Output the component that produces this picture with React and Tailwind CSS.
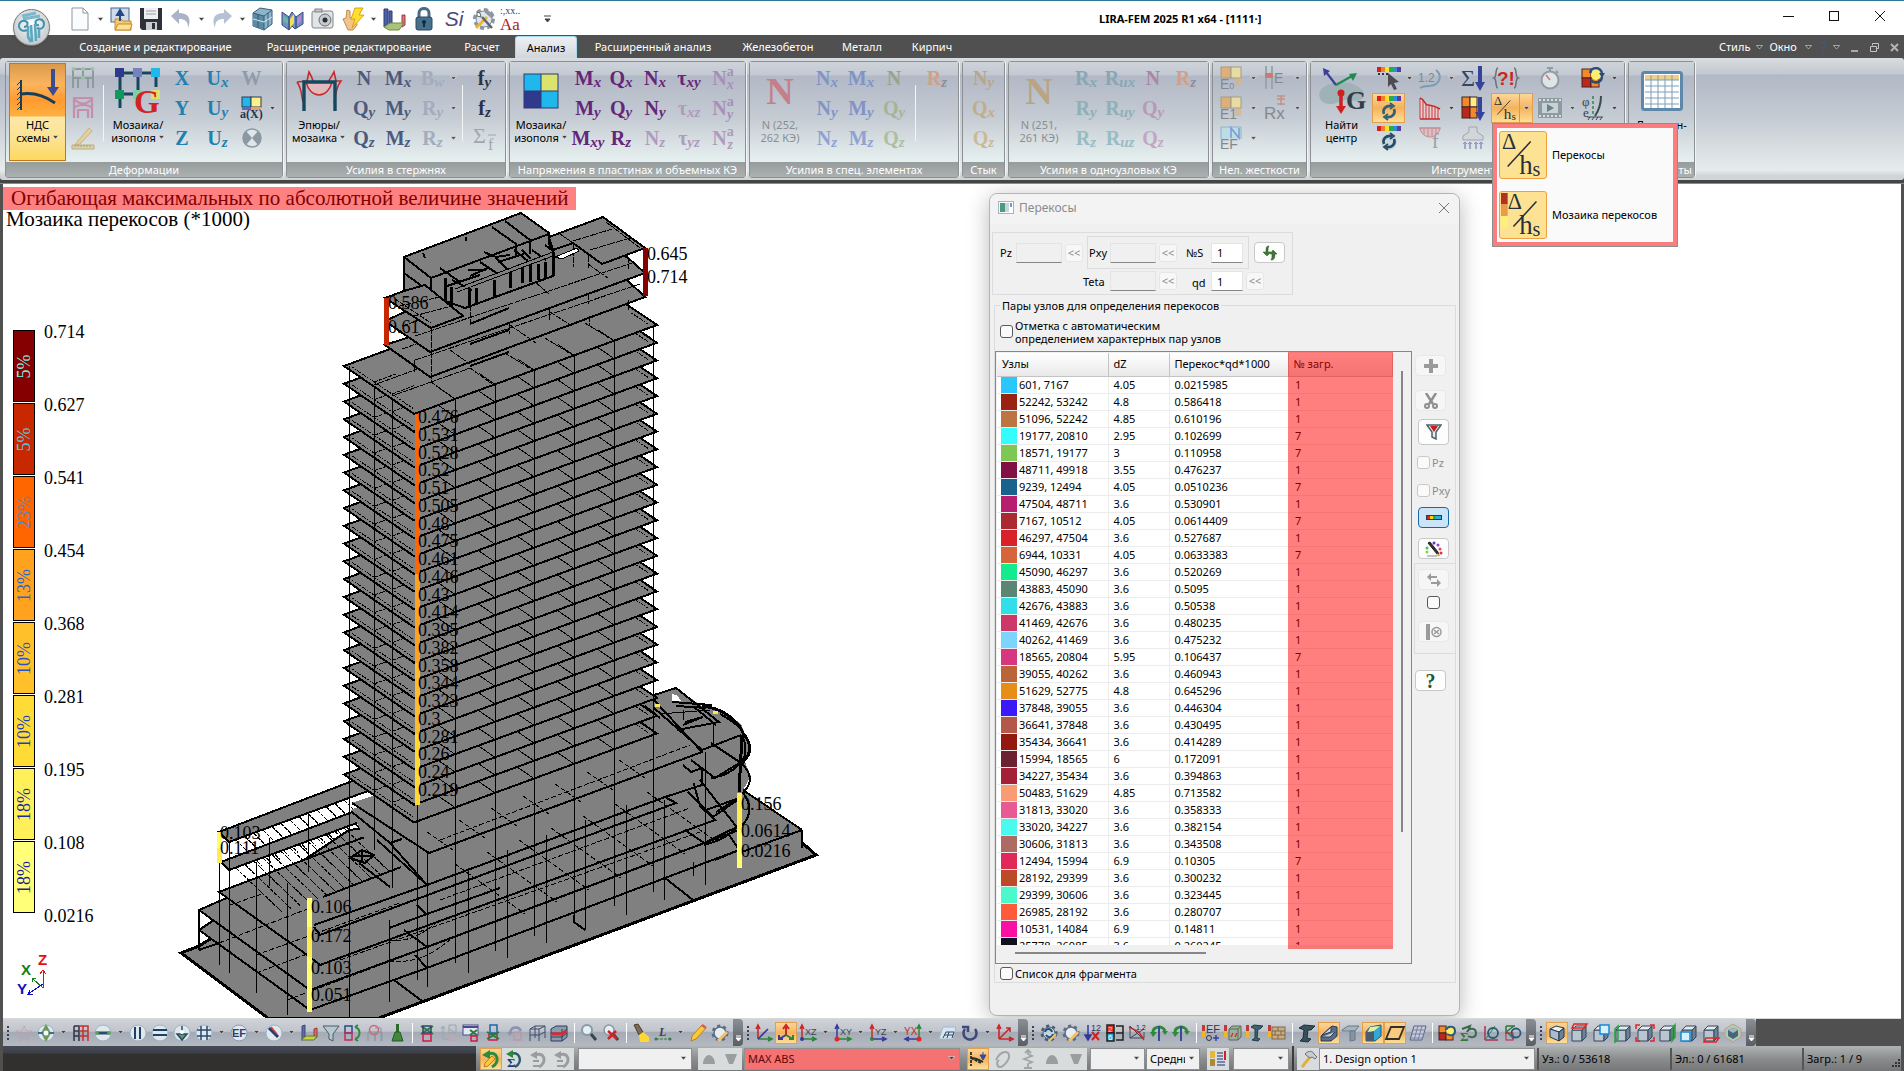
import React, { useState } from 'react';

// ---------- data ----------

const TABS = [
  { label: 'Создание и редактирование', cls: 'w-[187px]' },
  { label: 'Расширенное редактирование', cls: 'w-[200px]' },
  { label: 'Расчет', cls: 'w-[66px]' },
  { label: 'Анализ', cls: 'w-[62px]' },
  { label: 'Расширенный анализ', cls: 'w-[152px]' },
  { label: 'Железобетон', cls: 'w-[98px]' },
  { label: 'Металл', cls: 'w-[70px]' },
  { label: 'Кирпич', cls: 'w-[70px]' },
];

const ROWS = [
  ['#2bc6fb', '601, 7167', '4.05', '0.0215985', '1'],
  ['#9a2213', '52242, 53242', '4.8', '0.586418', '1'],
  ['#bd7443', '51096, 52242', '4.85', '0.610196', '1'],
  ['#35fdff', '19177, 20810', '2.95', '0.102699', '7'],
  ['#7dc855', '18571, 19177', '3', '0.110958', '7'],
  ['#821045', '48711, 49918', '3.55', '0.476237', '1'],
  ['#19628c', '9239, 12494', '4.05', '0.0510236', '7'],
  ['#b71e6f', '47504, 48711', '3.6', '0.530901', '1'],
  ['#ab2a31', '7167, 10512', '4.05', '0.0614409', '7'],
  ['#d9212a', '46297, 47504', '3.6', '0.527687', '1'],
  ['#d8653a', '6944, 10331', '4.05', '0.0633383', '7'],
  ['#12ec8c', '45090, 46297', '3.6', '0.520269', '1'],
  ['#5c8674', '43883, 45090', '3.6', '0.5095', '1'],
  ['#32dfe8', '42676, 43883', '3.6', '0.50538', '1'],
  ['#cd3868', '41469, 42676', '3.6', '0.480235', '1'],
  ['#7bd5ff', '40262, 41469', '3.6', '0.475232', '1'],
  ['#d7377f', '18565, 20804', '5.95', '0.106437', '7'],
  ['#bb6438', '39055, 40262', '3.6', '0.460943', '1'],
  ['#e68e18', '51629, 52775', '4.8', '0.645296', '1'],
  ['#3a19fb', '37848, 39055', '3.6', '0.446304', '1'],
  ['#b4594a', '36641, 37848', '3.6', '0.430495', '1'],
  ['#921810', '35434, 36641', '3.6', '0.414289', '1'],
  ['#6b2131', '15994, 18565', '6', '0.172091', '1'],
  ['#a42037', '34227, 35434', '3.6', '0.394863', '1'],
  ['#f99c73', '50483, 51629', '4.85', '0.713582', '1'],
  ['#e85a93', '31813, 33020', '3.6', '0.358333', '1'],
  ['#4afaef', '33020, 34227', '3.6', '0.382154', '1'],
  ['#ae6b63', '30606, 31813', '3.6', '0.343508', '1'],
  ['#e02859', '12494, 15994', '6.9', '0.10305', '7'],
  ['#bc4a29', '28192, 29399', '3.6', '0.300232', '1'],
  ['#4cf9ca', '29399, 30606', '3.6', '0.323445', '1'],
  ['#ff5a39', '26985, 28192', '3.6', '0.280707', '1'],
  ['#fb10a4', '10531, 14084', '6.9', '0.14811', '1'],
  ['#0e101c', '25778, 26985', '3.6', '0.260245', '1'],
];

const LEGEND = [
  ['#850000', '5%', '0.714', '#7ff0e0'],
  ['#c82800', '5%', '0.627', '#50c8e0'],
  ['#ff6600', '23%', '0.541', '#4a8ad0'],
  ['#ffa21e', '13%', '0.454', '#2c64c8'],
  ['#ffc02a', '10%', '0.368', '#2850c8'],
  ['#ffdc35', '10%', '0.281', '#2040b8'],
  ['#fff05a', '18%', '0.195', '#1c2ca0'],
  ['#ffff78', '18%', '0.108', '#1c2090'],
];

const TOWER_LABELS = [
  '0.476', '0.531', '0.528', '0.52', '0.51', '0.505', '0.48', '0.475', '0.461', '0.446', '0.43',
  '0.414', '0.395', '0.382', '0.358', '0.344', '0.323', '0.3', '0.281', '0.26', '0.24', '0.219',
];

// ---------- small helpers ----------

const Arrow = ({ light, className = '' }) => (
  <svg width="7" height="5" viewBox="0 0 7 5" className={`shrink-0 ${className}`}>
    <path d="M0.5 0.5h6L3.5 4z" fill={light ? '#555' : '#444'} stroke="#fff" strokeWidth="0.5" />
  </svg>
);

const Svg = ({ w = 24, h = w, vb = `0 0 ${w} ${h}`, children }) => (
  <svg width={w} height={h} viewBox={vb} className="block shrink-0 overflow-visible">{children}</svg>
);

// Letter with an index, as on the ribbon buttons
const Sym = ({ b, s, p, color = 'text-[#4b5a7c]', sc = '' }) => (
  <button className={`relative flex h-[30px] items-center justify-center font-serif-x text-[20px] leading-[22px] font-bold ${color}`}>
    <span>{b}</span>
    {p ? (
      <span className="flex flex-col text-[14px] leading-[13px]">
        <span>{p}</span>
        <span className="italic">{s}</span>
      </span>
    ) : (
      s && <span className={`-mb-2 text-[15px] leading-[16px] italic ${sc}`}>{s}</span>
    )}
  </button>
);

const Col = ({ w, children }) => (
  <div className={`flex shrink-0 flex-col items-center ${w}`}>{children}</div>
);

const Cell = ({ children, className = '' }) => (
  <div className={`flex h-[30px] items-center justify-center ${className}`}>{children}</div>
);

const Sep = ({ w }) => (
  <div className={`flex shrink-0 justify-center pt-[22px] ${w}`}>
    <div className="h-[56px] w-px bg-[#f4f6f6]" />
  </div>
);

const Panel = ({ w, label, children }) => (
  <section className={`flex h-[117px] shrink-0 flex-col rounded-[3px] border border-[#8d9092] shadow-[1px_0_0_#f4f4f4] ${w}`}>
    <div className="flex h-[100px] bg-[linear-gradient(#ced3da_0px,#c3c9d2_13px,#b2b9c6_14px,#c4cbd3_55px,#e6efef_98px)] pt-px">{children}</div>
    <div className="flex h-[15px] items-center justify-center bg-[linear-gradient(#969b9c,#abb0b1)] text-[11px] leading-[14px] whitespace-nowrap text-white">{label}</div>
  </section>
);

const BigButton = ({ w, icon, lines, arrow, dim }) => (
  <button className={`flex shrink-0 flex-col items-center text-[11px] leading-[13px] ${w} ${dim ? 'text-[#8a8d90]' : 'text-black'}`}>
    <span className="flex h-[55px] items-center justify-center">{icon}</span>
    <span>{lines[0]}</span>
    <span className="flex items-center gap-[2px] whitespace-nowrap">{lines[1]}{arrow && <Arrow />}</span>
  </button>
);

// ---------- ribbon icons ----------

const Mosaic = ({ s = 36 }) => (
  <Svg w={s} h={s} vb="0 0 36 36">
    <rect x="0.5" y="0.5" width="35" height="35" fill="#2d3a72" />
    <rect x="1.5" y="1.5" width="16" height="16" fill="#20b8ec" />
    <rect x="18.5" y="1.5" width="16" height="16" fill="#dbe36c" />
    <rect x="1.5" y="18.5" width="16" height="16" fill="#303a8c" />
    <rect x="18.5" y="18.5" width="16" height="16" fill="#20b8ec" />
  </Svg>
);

const BeamIcon = () => (
  <Svg w={42} h={46}>
    <path d="M4 12v30" stroke="#173f58" strokeWidth="2" />
    <path d="M0 17l4-4M0 22l4-4M0 27l4-4M0 32l4-4M0 37l4-4M0 42l4-4" stroke="#173f58" />
    <path d="M4 26c14-2 24 2 34 9" fill="none" stroke="#173f58" strokeWidth="3" />
    <path d="M36 1v20" stroke="#3c4c92" strokeWidth="4" />
    <path d="M30 19h12l-6 9z" fill="#3c4c92" />
  </Svg>
);

const MosaicG = () => (
  <Svg w={46} h={46}>
    <path d="M5 5h36M5 26h18M5 5v35M23 5v20M41 5v14" stroke="#17465f" strokeWidth="3" fill="none" />
    <rect width="9" height="9" fill="#303a8c" /><rect x="18" width="9" height="9" fill="#7482be" /><rect x="36" width="9" height="9" fill="#20b8ec" />
    <rect y="22" width="9" height="9" fill="#14965f" /><rect x="18" y="22" width="9" height="9" fill="#7fd0a8" /><rect x="36" y="22" width="9" height="9" fill="#dbe36c" />
    <text x="19" y="45" fontSize="33" fontWeight="bold" fill="#d22222" fontFamily="Liberation Serif">G</text>
  </Svg>
);

const DiagramIcon = () => (
  <Svg w={46} h={40}>
    <path d="M1 11l10-1 2-9c6 10 3 12 11 20C32 13 34 8 38 1l2 9h5c-6 8-5 14-7 22M1 11c5 7 4 12 6 20" fill="none" stroke="#c82a2a" strokeWidth="1.6" />
    <path d="M10 11c2 8 7 13 13 13s11-5 13-13z" fill="#e2b9bd" stroke="#c82a2a" strokeWidth="1.4" />
    <path d="M8 40V11h31v29" fill="none" stroke="#17465f" strokeWidth="3.4" />
  </Svg>
);

const BigN = ({ color }) => (
  <span className={`font-serif-x text-[38px] leading-[40px] font-bold ${color}`}>N</span>
);

const FrameIcon = ({ kind }) => (
  <Svg w={24}>
    {kind === 'frame' && <path d="M2 22V3h20v19M2 12h20M12 3v9M7 12v10M17 12v10" fill="none" stroke="#8d9a9e" strokeWidth="2" />}
    {kind === 'frame' && <g fill="#9cc3a8"><circle cx="2.500" cy="3" r="2" /><circle cx="12" cy="3" r="2" /><circle cx="21.500" cy="3" r="2" /><circle cx="12" cy="12" r="2" /></g>}
    {kind === 'pink' && <path d="M3 22V2h18v20M3 12c4-4 14-4 18 0M3 3c6 6 12 6 18 0M7 22v-8h10v8" fill="none" stroke="#c48fae" strokeWidth="2.200" />}
    {kind === 'ruler' && <g><path d="M6 16L18 2l3 3L9 18l-5 1z" fill="#e4cf9e" stroke="#c9b27e" /><path d="M1 19h22v4H1z" fill="#dcd2a4" stroke="#b9ad84" /><path d="M4 19v2M7 19v2M10 19v2M13 19v2M16 19v2M19 19v2" stroke="#a79b74" /></g>}
  </Svg>
);

const AxIcon = () => (
  <Svg w={24}>
    <rect x="2" y="1" width="9" height="10" fill="#20b8ec" stroke="#2d3a52" /><rect x="11" y="1" width="10" height="10" fill="#fcf18a" stroke="#2d3a52" />
    <rect x="2" y="11" width="9" height="3" fill="#6a67ae" /><rect x="11" y="11" width="10" height="3" fill="#e8a070" />
    <text x="0" y="22" fontSize="12" fontWeight="bold" fill="#23324f" fontFamily="Liberation Serif">a(X)</text>
  </Svg>
);

const CircleX = () => (
  <Svg w={20}>
    <circle cx="10" cy="10" r="9" fill="#8b99a5" />
    <path d="M10 10L4 3a9 9 0 0 1 12 0zM10 10l-6 7a9 9 0 0 0 12 0z" fill="#dfe5e8" />
    <circle cx="10" cy="10" r="9" fill="none" stroke="#8b99a5" strokeWidth="1.500" />
  </Svg>
);

const SumF = () => (
  <Svg w={24} h={26} vb="0 0 24 26">
    <text x="0" y="18" fontSize="22" fill="#9fa6b0" fontFamily="Liberation Serif">Σ</text>
    <text x="15" y="25" fontSize="16" fill="#9fa6b0" fontFamily="Liberation Serif">f</text>
    <path d="M15 10h8" stroke="#9fa6b0" />
  </Svg>
);

const StiffIcon = ({ t, sub, kind = 'box' }) => (
  <Svg w={24} h={26}>
    {kind === 'box' && <g><rect x="2" y="2" width="10" height="11" fill="#ddb078" stroke="#a39a8a" /><rect x="12" y="2" width="10" height="11" fill="#e6dca4" stroke="#a39a8a" /><path d="M16 13h6v8h-6" fill="#ddb078" opacity=".6" /></g>}
    {kind === 'bar' && <g><path d="M3 1v23M9 1v23" stroke="#9aa6ae" strokeWidth="2" /><rect x="2" y="8" width="8" height="5" fill="#c67c74" /></g>}
    {kind === 'ef' && <g><path d="M2 14V2h20v12" fill="#bcdce8" stroke="#8bb5c4" /><path d="M12 13V3l8 10V3" stroke="#7b9bd0" fill="none" strokeWidth="1.500" /></g>}
    {kind === 'rx' && <path d="M14 1h8M14 9h8M18 1v9M14 4h8" stroke="#c39187" strokeWidth="1.500" />}
    <text x={kind === 'bar' ? 11 : 1} y={kind === 'bar' ? 18 : 24} fontSize={kind === 'rx' ? 17 : 14} fill="#84888e" fontFamily="Liberation Sans">{t}<tspan fontSize="9">{sub}</tspan></text>
  </Svg>
);

const CenterIcon = () => (
  <Svg w={48} h={46}>
    <path d="M2 30c-4-10 10-16 22-16s24 8 22 14-10 5-16 4-10 4-16 4-10-1-12-6z" fill="#9fb2b6" />
    <path d="M18 17L8 4" stroke="#3b3f9a" strokeWidth="2.200" /><path d="M5 0l7 3-6 5z" fill="#3b3f9a" />
    <path d="M18 17l16-9" stroke="#1f8a4e" strokeWidth="2.200" /><path d="M39 5l-8 1 4 7z" fill="#1f8a4e" />
    <path d="M23 25v14" stroke="#cf2020" strokeWidth="3.500" /><circle cx="23" cy="25" r="3.500" fill="#cf2020" /><path d="M18 38h10l-5 8z" fill="#cf2020" />
    <text x="28" y="41" fontSize="26" fontWeight="bold" fill="#333d48" fontFamily="Liberation Serif">G</text>
  </Svg>
);

const ScaleBar = ({ y = 0 }) => (
  <g>
    {['#d81e1e', '#f08020', '#f6e22a', '#2da84a', '#2a8fd8', '#5a3a9c'].map((c, i) => (
      <rect key={c} x={i * 4} y={y} width="4" height="5" fill={c} />
    ))}
  </g>
);

const Rotor = ({ dark }) => (
  <g fill="none" stroke={dark ? '#274a63' : '#2f5f7a'} strokeWidth="2.600">
    <path d="M7 19c-2-5 2-9 8-8" /><path d="M17 14c2 5-2 9-8 8" />
    <path d="M13 8l4 3-4 3M11 19l-4 3 4 3" strokeWidth="1.800" />
  </g>
);

const ToolIcon = ({ k }) => (
  <Svg w={24} h={26}>
    {k === 'pick' && <g><ScaleBar y={2} /><path d="M1 9h2M5 9h2M9 9h2" stroke="#333" strokeWidth="2" /><path d="M11 8l11 9-5 1 3 6-3 1-3-6-3 3z" fill="#4e4a52" /></g>}
    {k === 'rot' && <g><ScaleBar y={1} /><Rotor /></g>}
    {k === 'rot2' && <g><ScaleBar y={1} /><circle cx="12" cy="17" r="8" fill="#c9d6df" /><Rotor dark /></g>}
    {k === 'num' && <g><text x="0" y="17" fontSize="12" fill="#7b8894" fontFamily="Liberation Sans">1.2</text><path d="M18 5c5 4 5 10 0 14s-10 0-16 4" fill="none" stroke="#7b9cb4" strokeWidth="2" /></g>}
    {k === 'graph' && <g><path d="M2 3c6 2 3 6 8 7s5 0 12 4v10H2z" fill="#e9ccd0" /><path d="M2 24V3M5 24V5M8 24V9M11 24V11M14 24V11M17 24V12M20 24V13" stroke="#c43a3a" /><path d="M2 3c6 2 3 6 8 7s5 0 12 4M2 24h20" fill="none" stroke="#c42a2a" strokeWidth="1.600" /></g>}
    {k === 'f' && <g><path d="M2 3c2 12 18 12 20 0z" fill="#e0bfc4" stroke="#c08c92" /><path d="M1 3h22M6 4v5M10 4v7M14 4v7M18 4v5" stroke="#c08c92" /><text x="14" y="23" fontSize="20" fill="#9a9ea2" fontFamily="Liberation Serif">f</text></g>}
    {k === 'sum' && <g><text x="0" y="21" fontSize="24" fill="#33456b" fontFamily="Liberation Serif">Σ</text><path d="M19 1v17" stroke="#35449a" strokeWidth="4" /><path d="M14 17h10l-5 9z" fill="#35449a" /></g>}
    {k === 'mos' && <g><rect x="1" y="2" width="8" height="10" fill="#f08a2a" stroke="#4a2020" /><rect x="9" y="2" width="7" height="10" fill="#fcef8a" stroke="#4a2020" /><rect x="1" y="12" width="8" height="11" fill="#b8281e" stroke="#4a2020" /><rect x="9" y="12" width="7" height="11" fill="#f08a2a" stroke="#4a2020" /><path d="M19 2v17" stroke="#35449a" strokeWidth="4" /><path d="M14 17h10l-5 9z" fill="#35449a" /></g>}
    {k === 'soil' && <g><path d="M8 2h8v5l6 4v4H2v-4l6-4z" fill="#d2d6da" stroke="#9ea6ae" /><path d="M4 24v-6M9 24v-6M15 24v-6M20 24v-6" stroke="#8b93bc" strokeWidth="1.500" /><path d="M2 19l2-2 2 2M7 19l2-2 2 2M13 19l2-2 2 2M18 19l2-2 2 2" stroke="#8b93bc" fill="none" /></g>}
    {k === 'q' && <g><text x="3" y="20" fontSize="19" fontWeight="bold" fill="#cc2424" fontFamily="Liberation Sans">?!</text><path d="M4 3c-3 0-1 9-4 10 3 1 1 10 4 10M20 3c3 0 1 9 4 10-3 1-1 10-4 10" fill="none" stroke="#6b7078" strokeWidth="1.500" /></g>}
    {k === 'watch' && <g><circle cx="12" cy="15" r="8.500" fill="#dfe4e6" stroke="#909ca2" strokeWidth="2" /><path d="M9 3h6M12 3v4M18 6l2 2" stroke="#909ca2" strokeWidth="2" /><path d="M12 15L8 10" stroke="#c47a7a" strokeWidth="1.500" /></g>}
    {k === 'film' && <g><rect x="0" y="3" width="24" height="20" fill="#8e9aa0" /><path d="M1 5h22M1 21h22" stroke="#d9e0e2" strokeWidth="2" strokeDasharray="2 2" /><rect x="4" y="8" width="16" height="10" fill="#c6d2d6" /><path d="M9 9l7 4-7 4z" fill="#6f7f88" /></g>}
    {k === 'swap' && <g><rect x="1" y="4" width="9" height="9" fill="#f08a2a" stroke="#4a2020" /><rect x="1" y="13" width="9" height="9" fill="#b8281e" stroke="#4a2020" /><rect x="10" y="13" width="8" height="9" fill="#f08a2a" stroke="#4a2020" /><circle cx="15" cy="10" r="5" fill="#fcef6a" /><path d="M9 8c1-6 10-7 12 0M21 12c-1 6-8 7-11 3" fill="none" stroke="#274a78" strokeWidth="2.400" /><path d="M18 8h6l-3 5z" fill="#274a78" /></g>}
    {k === 'phi' && <g><text x="1" y="11" fontSize="13" fill="#3a4248" fontFamily="Liberation Serif">φ</text><text x="2" y="22" fontSize="13" fill="#3a4248" fontFamily="Liberation Serif">e</text><path d="M12 1v20" stroke="#2d8a4a" strokeDasharray="3 2" strokeWidth="1.500" /><path d="M20 1c0 8-2 14-6 20" stroke="#3c4a52" strokeWidth="2" fill="none" /><path d="M6 22h16M7 25l2-3M11 25l2-3M15 25l2-3M19 25l2-3" stroke="#3c4a52" /></g>}
  </Svg>
);

const DeltaHs = ({ size = 26, mosaic }) => (
  <Svg w={size} h={size} vb="0 0 48 48">
    {mosaic && <g><rect x="1" y="1" width="7" height="12" fill="#b13222" /><rect x="1" y="13" width="7" height="12" fill="#ea9a48" /><rect x="1" y="25" width="7" height="12" fill="#fbf07a" /></g>}
    <g transform={mosaic ? 'translate(6 0)' : undefined} fill="#26303a" fontFamily="Liberation Serif">
      <text x="2" y="18" fontSize="23">Δ</text>
      <path d="M8 36L32 10" stroke="#26303a" strokeWidth="1.600" />
      <text x={mosaic ? 14 : 20} y="44" fontSize="28">h<tspan fontSize="21" dy="2">s</tspan></text>
    </g>
  </Svg>
);

const TableIcon = () => (
  <Svg w={42} h={40}>
    <rect x="1.500" y="1.500" width="39" height="37" rx="2" fill="#fdfdfd" stroke="#5d88ab" strokeWidth="3" />
    <rect x="4" y="4" width="34" height="5" fill="#eed08a" />
    <path d="M4 9h34M4 15h34M4 21h34M4 27h34M4 33h34M10 4v33M17 4v33M24 4v33M31 4v33" stroke="#7f9fba" />
  </Svg>
);

// ---------- quick access icons ----------

const QIcon = ({ k }) => (
  <Svg w={24}>
    {k === 'new' && <path d="M4 1h11l5 5v17H4zM15 1v5h5" fill="#fbfcfd" stroke="#8e979e" />}
    {k === 'open' && <g><rect x="2" y="1" width="18" height="14" fill="#cfdbea" stroke="#47648e" /><path d="M6 23V12h6l2 2h8v9z" fill="#f7c765" stroke="#c58c2a" /><path d="M9 17h14l-2 6H6z" fill="#fbe09a" stroke="#c58c2a" /><path d="M11 14V6M8 8l3-5 3 5z" stroke="#244a86" strokeWidth="2" fill="#244a86" /></g>}
    {k === 'save' && <g><path d="M1 1h22v22H3l-2-2z" fill="#2e3136" /><rect x="5" y="1" width="14" height="11" fill="#eef0f2" /><path d="M7 4h10M7 7h10" stroke="#9aa0a6" /><rect x="7" y="15" width="11" height="8" fill="#c9cdd2" /><rect x="13" y="16" width="3" height="6" fill="#2e3136" /></g>}
    {k === 'undo' && <path d="M2 9l8-7v4c9 0 13 5 9 15 0-7-3-9-9-9v5z" fill="#aab3c8" />}
    {k === 'redo' && <path d="M22 9l-8-7v4C5 6 1 11 5 21c0-7 3-9 9-9v5z" fill="#b4c2d4" />}
    {k === 'cube' && <g><path d="M2 6l7-5 12 2v14l-8 6-11-4z" fill="#8db4c8" stroke="#34617c" /><path d="M2 6v13l11 4V9z" fill="#5b8aa4" /><path d="M2 6l11 3 8-6M13 9v14M7 7v14M17 6v14" stroke="#34617c" fill="none" /><path d="M2 12l11 3 8-5" stroke="#d7e7ee" fill="none" /></g>}
    {k === 'map' && <g><path d="M1 5l7 5 3-5 4 5 7-5v12l-8 5-3-3-3 4-7-5z" fill="#6e8fc8" stroke="#3c4c7c" /><path d="M8 10v12M15 10v11" stroke="#2b3763" /><path d="M9 12l4-5v9l-4 5z" fill="#f0e15a" /><path d="M16 11l4-3v6l-4 4z" fill="#b48ad0" /><path d="M2 8l5 4v5l-5-3z" fill="#69b8a0" /></g>}
    {k === 'cam' && <g><rect x="1" y="4" width="21" height="17" rx="2" fill="#e2e5e7" stroke="#80868a" /><rect x="4" y="2" width="7" height="3" fill="#c2c6c9" stroke="#80868a" /><circle cx="14" cy="13" r="6" fill="#c4cace" stroke="#6a7074" /><circle cx="14" cy="13" r="2.500" fill="#2b2f33" /></g>}
    {k === 'bolt' && <g><path d="M2 12l3-1 1-8 3 1v7h6l1 7-4 5H7z" fill="#f0c48a" stroke="#c48a4a" /><path d="M14 1h8l-4 7h5L11 21l3-9h-4z" fill="#ffe02a" stroke="#d8a018" /></g>}
    {k === 'books' && <g><path d="M2 2h4v15l-4 3zM7 4h3v12l-3 2z" fill="#4a5fa8" stroke="#2e3c78" /><path d="M20 8h3v10l-3 2z" fill="#d87878" stroke="#a03838" /><path d="M2 20l6-4h14l-5 7H7z" fill="#a9c47a" stroke="#6d8a44" /></g>}
    {k === 'lock' && <g><path d="M7 11V6c0-6 10-6 10 0v5" fill="none" stroke="#4b6a84" strokeWidth="3" /><rect x="4" y="10" width="16" height="13" rx="2" fill="#46708e" stroke="#2c4a62" /><circle cx="12" cy="15" r="2" fill="#182a3a" /><path d="M12 15v5" stroke="#182a3a" strokeWidth="2" /></g>}
    {k === 'gear' && <g><circle cx="12" cy="12" r="9" fill="none" stroke="#8c98a4" strokeWidth="4" strokeDasharray="4 3" /><circle cx="12" cy="12" r="8" fill="#dfe5ea" stroke="#7c8994" /><path d="M4 21L15 10" stroke="#f2b430" strokeWidth="3" /><path d="M20 21L10 10" stroke="#5c6670" strokeWidth="2.500" /><path d="M14 4l7 6" stroke="#8c98a4" strokeWidth="4" /><path d="M5 5l3 1 1 4-4-1z" fill="#fff" stroke="#5c6670" /></g>}
  </Svg>
);

// ---------- bottom toolbar icons ----------

const cubeBase = (
  <g stroke="#33475a"><path d="M3 7h10v11H3z" fill="#b9c6d2" /><path d="M3 7l4-4h10l-4 4z" fill="#e4eaef" /><path d="M13 7l4-4v11l-4 4z" fill="#6d8296" /></g>
);
const node = (color = '#9cb4c4') => <circle cx="10" cy="10" r="8" fill="#dfe8ee" stroke={color} />;

const ICONS = {
  star: <path d="M10 3l2 5 6 0-5 4 2 6-5-4-5 4 2-6-5-4h6z" fill="none" stroke="#c79aa4" strokeDasharray="2 1" />,
  diamond: <g>{node()}<path d="M10 1l5 9-5 9-5-9z" fill="#6d9a5a" /><path d="M2 10h16" stroke="#4a6a8a" strokeWidth="2" /><circle cx="10" cy="10" r="2.500" fill="#fff" /></g>,
  mesh: <g fill="none" strokeWidth="1.500"><path d="M3 18V3M3 8h5M3 13h5M8 3v15M3 3h5" stroke="#334" /><path d="M8 3h9v15M12 3v15M8 8h9M8 13h9" stroke="#c43030" /></g>,
  circH: <g>{node()}<path d="M4 10h12" stroke="#2d4a6a" strokeWidth="3" /><circle cx="4" cy="10" r="2" fill="#5c9c5c" /><circle cx="16" cy="10" r="2" fill="#5c9c5c" /></g>,
  circV: <g>{node()}<path d="M7 4v12M12 4v12" stroke="#1f4060" strokeWidth="2" /></g>,
  circE: <g>{node()}<path d="M3 7h14M3 12h14" stroke="#1f4060" strokeWidth="2" /></g>,
  circG: <g>{node()}<path d="M10 3v5M5 11l5 6 5-6z" stroke="#2d4a6a" strokeWidth="1.500" fill="#5c9c5c" /><circle cx="10" cy="9" r="2" fill="#fff" /></g>,
  hash: <g>{node()}<path d="M7 3v14M13 3v14M3 7h14M3 13h14" stroke="#2d4a6a" strokeWidth="1.500" /></g>,
  ef: <g>{node('#8a9ab4')}<text x="3" y="14" fontSize="11" fontWeight="bold" fill="#2c3c6c" fontFamily="Liberation Sans">EF</text></g>,
  circP: <g>{node()}<path d="M5 5l9 9" stroke="#2a3a6a" strokeWidth="3" /><path d="M7 4l6 7" stroke="#d04030" strokeWidth="1.500" /></g>,
  book: <g><path d="M3 3l3-1v13l-3 2z" fill="#5c6aa8" stroke="#3c4a80" /><path d="M15 6l3-1v9l-3 2z" fill="#d86a6a" stroke="#a03838" /><path d="M2 17l5-4h11l-3 4z" fill="#c8d23a" stroke="#5c7a3a" /></g>,
  funnel: <path d="M2 3h16l-6 8v7l-4-2v-5z" fill="#b8c8d0" stroke="#4a5a66" />,
  sel: <g fill="none" strokeWidth="1.500"><rect x="2" y="3" width="7" height="7" stroke="#274a8a" /><rect x="2" y="10" width="7" height="7" stroke="#c82a5a" /><path d="M12 4c6 2 6 10 0 12M12 4l3-2M12 16l3 2" stroke="#2d8a3a" strokeWidth="2" /></g>,
  frame: <g fill="none" stroke="#8a96a0"><path d="M3 18V9h7v9M10 18V9h7v9M10 5h6v13" /><circle cx="9" cy="7" r="4.500" stroke="#c86a7a" strokeWidth="1.500" /></g>,
  brush: <g><path d="M9 1h3v8H9z" fill="#2c6a2c" /><path d="M8 9h5l3 9H5z" fill="#3f8a3a" stroke="#285a26" /></g>,
  box1: <g fill="none" strokeWidth="1.500"><path d="M4 3l12 8M16 3L4 11" stroke="#2a7a3a" strokeWidth="2" /><rect x="6" y="3" width="8" height="7" stroke="#274a6a" /><rect x="6" y="11" width="8" height="7" stroke="#d0184a" /></g>,
  box2: <g fill="none" stroke="#98a6ae"><path d="M4 4v12h6M2 6l2-3 2 3M10 2h7v8h-7zM10 6l7 4" /><path d="M10 12v5h7v-5z" stroke="#c8a0ac" /></g>,
  box3: <g fill="none"><rect x="2" y="2" width="15" height="10" fill="#e4e8f4" stroke="#4a4a8a" /><path d="M2 4h15" stroke="#4a4a8a" strokeWidth="2" /><path d="M9 7l7 5M16 7l-7 5" stroke="#2a7a3a" strokeWidth="2" /><rect x="10" y="13" width="6" height="5" stroke="#d0184a" strokeWidth="1.500" /></g>,
  box4: <g fill="none" strokeWidth="1.500"><rect x="7" y="2" width="7" height="8" stroke="#1868a8" /><rect x="6" y="11" width="8" height="6" stroke="#d0184a" /><path d="M4 9l12 7M16 9L4 16" stroke="#2a7a3a" strokeWidth="2" /></g>,
  box5: <g fill="none"><path d="M5 10C6 3 14 3 16 8" stroke="#8a94b0" strokeWidth="2.500" /><path d="M2 9h6l-3 4z" fill="#8a94b0" /><rect x="9" y="9" width="7" height="8" stroke="#c88aa0" /></g>,
  lat: <path d="M3 18V6l5-3h10v12M3 6h9l6-3M3 12h9l6-3M12 6v12M8 3v12" fill="none" stroke="#3c4c6c" />,
  lat2: <g><path d="M2 6l5-3h11v11l-5 4H2z" fill="#8c9cb0" stroke="#2c3c5c" /><path d="M2 10h11l5-4M2 14h11l5-4M13 6v12" stroke="#2c3c5c" fill="none" /><path d="M3 11h10l4-3" stroke="#e02828" strokeWidth="3" fill="none" /></g>,
  mag: <g><circle cx="8" cy="7" r="5" fill="#e4f0f8" stroke="#8a98a4" strokeWidth="2" /><path d="M12 11l5 6" stroke="#3a444c" strokeWidth="3" /></g>,
  magx: <g><circle cx="8" cy="7" r="5" fill="#e4f0f8" stroke="#8a98a4" strokeWidth="1.500" /><path d="M12 11l5 6" stroke="#3a444c" strokeWidth="3" /><path d="M7 8l9 8M15 8l-8 8" stroke="#d02424" strokeWidth="2.500" /></g>,
  torch: <g><path d="M3 2l4-1 5 8-4 3z" fill="#7c6a5a" stroke="#4c3a2a" /><path d="M8 12l4-3 6 5v5H9z" fill="#ffd834" /></g>,
  L: <g><path d="M3 16h14" stroke="#3a7a4a" strokeDasharray="3 1" /><circle cx="3" cy="16" r="1.500" fill="#3a7a4a" /><circle cx="17" cy="16" r="1.500" fill="#3a7a4a" /><text x="6" y="13" fontSize="12" fontStyle="italic" fontWeight="bold" fill="#3a4450" fontFamily="Liberation Serif">L</text></g>,
  pen: <g><path d="M3 18l1-5L14 2l4 3L8 16z" fill="#fcc83a" stroke="#b8801a" /><path d="M14 2l4 3" stroke="#e05a4a" strokeWidth="2.500" /></g>,
  gear: <g><circle cx="10" cy="10" r="7" fill="none" stroke="#5a6c84" strokeWidth="3" strokeDasharray="3 3" /><circle cx="10" cy="10" r="6" fill="#e6ecf0" stroke="#5a6c84" strokeWidth="1.500" /><path d="M8 18l9-9" stroke="#f4c06a" strokeWidth="3" /></g>,
  ax: <g fill="none" strokeWidth="1.600"><path d="M4 16V3M2 6l2-4 2 4" stroke="#c82828" /><path d="M4 16h13M14 14l4 2-4 2" stroke="#28883a" /><path d="M4 16L14 6" stroke="#3838a0" /></g>,
  ax3: <g fill="none" strokeWidth="2"><path d="M10 12V4M7 6l3-4 3 4" stroke="#c82828" /><path d="M10 12l-7 4M3 12v4h4" stroke="#3838a0" /><path d="M10 12l7 4M17 12v4h-4" stroke="#28883a" /></g>,
  xz: <g><path d="M4 16V3M2 6l2-4 2 4" stroke="#c82828" fill="none" strokeWidth="1.500" /><path d="M4 16h13M14 14l4 2-4 2" stroke="#28883a" strokeWidth="1.500" fill="none" /><circle cx="4" cy="16" r="2" fill="#3838a0" /><text x="7" y="12" fontSize="9" fill="#3a4450" fontFamily="Liberation Sans">XZ</text></g>,
  xy: <g><path d="M4 16V3M2 6l2-4 2 4" stroke="#3838a0" fill="none" strokeWidth="1.500" /><path d="M4 16h13M14 14l4 2-4 2" stroke="#28883a" strokeWidth="1.500" fill="none" /><circle cx="4" cy="16" r="2.500" fill="#e02828" /><text x="7" y="12" fontSize="9" fill="#3a4450" fontFamily="Liberation Sans">XY</text></g>,
  yz: <g><path d="M4 16V3M2 6l2-4 2 4" stroke="#c82828" fill="none" strokeWidth="1.500" /><path d="M4 16h13M14 14l4 2-4 2" stroke="#3838a0" strokeWidth="1.500" fill="none" /><circle cx="4" cy="16" r="2" fill="#28883a" /><text x="7" y="12" fontSize="9" fill="#3a4450" fontFamily="Liberation Sans">YZ</text></g>,
  yx: <g><path d="M16 16V3M14 6l2-4 2 4" stroke="#28883a" fill="none" strokeWidth="1.500" /><path d="M3 16h13M6 14l-4 2 4 2" stroke="#3838a0" strokeWidth="1.500" fill="none" /><circle cx="16" cy="16" r="2.500" fill="#e02828" /><text x="1" y="12" fontSize="10" fill="#c82828" fontFamily="Liberation Sans">YX</text></g>,
  plane: <g><path d="M5 4h13l-3 12H1z" fill="#d6e6f4" stroke="#a4b8c8" /><path d="M5 15l3-6h8l-2 6M6 12h9M11 9l-2 6" stroke="#33475a" fill="none" /></g>,
  rotate: <path d="M5 6a6.500 6.500 0 1 0 10 0M2 4h6v5" fill="none" stroke="#3c4a7c" strokeWidth="2.600" />,
  axr: <g fill="none" stroke="#c82828" strokeWidth="1.600"><path d="M4 16V3M2 6l2-4 2 4M4 16h13M14 14l4 2-4 2M4 16L15 5M11 5h4v4" /></g>,
  gearR: <g><circle cx="10" cy="10" r="7" fill="none" stroke="#4a5c74" strokeWidth="3" strokeDasharray="3 3" /><circle cx="10" cy="10" r="6" fill="#c8d4e0" stroke="#4a5c74" /><path d="M6 9c1-4 6-4 7 0M14 11c-1 4-5 4-7 1" stroke="#1f5078" strokeWidth="2" fill="none" /><path d="M10 18l7-7" stroke="#f4c06a" strokeWidth="2" /></g>,
  n12: <g><path d="M5 2v13M2 12l3 5 3-5z" fill="#3038a0" stroke="#3038a0" strokeWidth="1.500" /><text x="8" y="8" fontSize="9" fill="#2c3a5c" fontFamily="Liberation Sans">12</text><path d="M9 9l7 8M16 9l-7 8" stroke="#d02020" strokeWidth="2" /></g>,
  n26: <g><rect x="2" y="2" width="7" height="8" fill="#e83030" stroke="#222" strokeWidth="1.500" /><rect x="2" y="10" width="7" height="8" fill="#40a8d8" stroke="#222" strokeWidth="1.500" /><path d="M11 3h7v14h-7M11 10h7" fill="none" stroke="#222" strokeWidth="1.500" /><text x="3" y="9" fontSize="8" fill="#ffe860" fontFamily="Liberation Sans">2</text><text x="3" y="17" fontSize="8" fill="#fff" fontFamily="Liberation Sans">6</text></g>,
  net: <g fill="none"><path d="M3 3l14 14M17 6L3 15M3 3v12h14V9" stroke="#445" /><path d="M2 4l10 5 5 8" stroke="#c82828" strokeWidth="1.500" /><text x="9" y="7" fontSize="7" fill="#223" fontFamily="Liberation Sans">1.2</text></g>,
  green: <g fill="none"><path d="M4 10C3 3 14 2 16 8" stroke="#2d8a3a" strokeWidth="3" /><path d="M1 9h7l-4 5zM13 8h6l-3 4z" fill="#2d8a3a" /><path d="M10 3v15" stroke="#384a9a" strokeWidth="2" /></g>,
  efp: <g><rect x="1" y="2" width="3" height="6" fill="#c03838" /><rect x="1" y="8" width="3" height="6" fill="#e8b830" /><text x="5" y="10" fontSize="11" fill="#2c3850" fontFamily="Liberation Sans">EF</text><circle cx="8" cy="15" r="2.500" fill="none" stroke="#334" /><path d="M12 15h6M15 12v6" stroke="#3040a0" strokeWidth="1.500" /></g>,
  cubeF: <g><rect x="1" y="2" width="3" height="6" fill="#c03838" /><rect x="1" y="8" width="3" height="6" fill="#e8b830" /><path d="M6 6l3-3h9v11l-3 3H6z" fill="#9ab09a" stroke="#5a6a5c" /><path d="M6 6h9l3-3M15 6v11" stroke="#5a6a5c" fill="none" /><path d="M8 14l2-4M12 14l2-4" stroke="#c83838" strokeWidth="1.500" /></g>,
  beamF: <g><rect x="1" y="2" width="3" height="6" fill="#c03838" /><rect x="1" y="8" width="3" height="6" fill="#e8b830" /><path d="M6 4l3-2 9 1-3 3h-2l-1 9 3 1-2 2-6-1 3-2V6z" fill="#3c6470" stroke="#223c46" /></g>,
  brick: <g><rect x="1" y="2" width="3" height="6" fill="#c03838" /><rect x="1" y="8" width="3" height="6" fill="#e8b830" /><rect x="5" y="4" width="13" height="12" fill="#c8ac84" stroke="#806a4a" /><path d="M5 8h13M5 12h13M11 4v4M8 8v4M14 8v4M11 12v4" stroke="#806a4a" /></g>,
  ibeam: <path d="M2 5l5-3 11 1-4 4h-3l-1 8 4 1-3 3-8-1 3-3 1-8z" fill="#36505c" stroke="#1d3038" />,
  wedge: <g><path d="M2 13l11-10 5 1v9l-6 5H2z" fill="#5a6c8c" stroke="#2c3c4c" /><path d="M3 12l9-8v5zM3 14h8l5-5" fill="#c8d4dc" stroke="#2c3c4c" /></g>,
  slab: <g><path d="M1 7l6-4h11l-4 5H1z" fill="#a8b4c0" stroke="#6a7886" /><path d="M9 8h5v9l-5 1z" fill="#8494a4" stroke="#6a7886" /></g>,
  wall: <g><path d="M3 9l4-5 11-2v11l-6 5H3z" fill="#30a8d8" stroke="#1c5a7c" /><path d="M3 9l8-1v10H3z" fill="#4c5c6c" /><path d="M7 4l10-1-6 5-6 1z" fill="#e8f0a0" /></g>,
  plate: <path d="M6 4h13l-5 12H1z" fill="#f7ca80" stroke="#33302a" strokeWidth="1.800" />,
  plateN: <g><path d="M7 3h12l-4 14H3z" fill="#c8ccda" stroke="#5a608a" /><path d="M6 7h12M5 11h12M4 15h12M11 3L7 17M15 3l-4 14" stroke="#7a80a4" /></g>,
  mosR: <g><rect x="2" y="3" width="7" height="7" fill="#f08a2a" stroke="#4a2020" /><rect x="2" y="10" width="7" height="7" fill="#b8281e" stroke="#4a2020" /><rect x="9" y="10" width="7" height="7" fill="#f08a2a" stroke="#4a2020" /><path d="M9 7c2-5 9-4 9 1s-5 5-8 3" fill="#fcef6a" stroke="#2a5a7a" strokeWidth="2" /></g>,
  sumR: <g><text x="1" y="18" fontSize="13" fontWeight="bold" fill="#2d7a3a" fontFamily="Liberation Serif">Σ</text><path d="M3 6l8-3-2 5M8 9c2-5 9-4 9 1s-5 5-8 3" fill="none" stroke="#3a6a4a" strokeWidth="2" /></g>,
  axR2: <g fill="none"><path d="M4 17V3M4 17h13" stroke="#b03050" strokeWidth="1.500" /><path d="M4 17L14 3" stroke="#2d8a3a" /><circle cx="12" cy="10" r="5" stroke="#2a5a7a" strokeWidth="1.800" /></g>,
  efR: <g fill="none"><path d="M3 3h9M3 3v8M3 8l8 8M11 3L3 9" stroke="#2d7a3a" strokeWidth="1.500" /><rect x="3" y="10" width="7" height="7" stroke="#d0184a" /><circle cx="13" cy="10" r="4.500" stroke="#2a5a7a" strokeWidth="1.800" /></g>,
  c0: <g stroke="#22384a"><path d="M3 6l6-3 8 2-5 4z" fill="#e8f0f4" /><path d="M3 6l9 3v9l-9-4z" fill="#a8bccc" /><path d="M12 9l5-4v9l-5 4z" fill="#6a8094" /></g>,
  c1: <g>{cubeBase}<path d="M5 1h13l-3 4H3z" fill="none" stroke="#e02424" strokeWidth="1.500" /></g>,
  c2: <g>{cubeBase}<rect x="9" y="2" width="9" height="9" fill="#d8f0fc" stroke="#1888d0" strokeWidth="1.500" /></g>,
  c3: <g>{cubeBase}<path d="M2 6l3-3v13l-3 3z" fill="none" stroke="#28a040" strokeWidth="1.500" /></g>,
  c4: <g>{cubeBase}<path d="M1 6V2h4M15 2h4v4M1 14v4h4M15 18h4v-4" fill="none" stroke="#e02424" strokeWidth="1.500" /></g>,
  c5: <g>{cubeBase}<path d="M15 6l3-4v12l-3 4z" fill="none" stroke="#28a040" strokeWidth="1.500" /></g>,
  c6: <g>{cubeBase}<rect x="2" y="9" width="9" height="9" fill="#d8f0fc" stroke="#1888d0" strokeWidth="1.500" /></g>,
  c7: <g>{cubeBase}<path d="M5 15h13l-3 4H3z" fill="none" stroke="#e02424" strokeWidth="1.500" /></g>,
  c8: <g><path d="M10 1l8 5v8l-8 5-8-5V6z" fill="#a8d0b0" stroke="#d09090" /><path d="M5 7l5-2 5 2v6l-5 3-5-3z" fill="#4a6478" /><path d="M5 7l5 3 5-3-5-2z" fill="#a4b8c8" /></g>,
  sigR: <g><path d="M6 5c8-4 13 8 4 13" fill="none" stroke="#2c5a6c" strokeWidth="2.500" /><path d="M1 5l7-4v8z" fill="#2d8a3a" /><text x="2" y="18" fontSize="13" fontWeight="bold" fill="#223c70" fontFamily="Liberation Serif">Σ</text></g>,
  penR: <g><path d="M7 5c9-4 13 8 4 13" fill="none" stroke="#2d8a3a" strokeWidth="3" /><path d="M1 6l8-5v9z" fill="#2d8a3a" /><path d="M3 18l1-4 7-7 3 3-7 7z" fill="#fcc83a" stroke="#b8801a" /></g>,
  greyR: <g fill="none" stroke="#9a9d9e" strokeWidth="3"><path d="M6 6c9-4 13 7 4 12" /><path d="M1 6l7-4v8z" fill="#9a9d9e" stroke="none" /><path d="M4 12h6M4 17h6" strokeWidth="2" /></g>,
  up: <path d="M4 15h12c0-5-3-9-6-9s-6 4-6 9z" fill="#9b9e9e" />,
  down: <path d="M4 5h12l-4 10H8z" fill="#9b9e9e" />,
  def: <g><path d="M3 3v14M3 9l10 5" stroke="#26302a" strokeWidth="1.800" strokeDasharray="3 1" /><path d="M3 9c5 0 8 2 12 4" stroke="#26302a" fill="none" strokeWidth="1.800" /><path d="M15 3v4M12 6h6l-3 5z" stroke="#3848a0" fill="#3848a0" /></g>,
  curve: <path d="M3 11c4-9 12-10 13-5s-6 12-9 12-4-5-1-7" fill="none" stroke="#a2a5a6" strokeWidth="2" />,
  spring: <path d="M10 1v4l4 2-8 3 8 3-4 2v4M6 19h8M7 4l3-3 3 3" fill="none" stroke="#a2a5a6" strokeWidth="1.800" />,
  list: <g><rect x="2" y="2" width="5" height="7" fill="#e8b830" /><rect x="2" y="10" width="5" height="7" fill="#b08a30" /><path d="M9 4h6M9 7h6M9 10h6M9 13h8M9 16h8" stroke="#5a6a9c" strokeWidth="1.500" /><rect x="16" y="2" width="2" height="9" fill="#d02424" /></g>,
  hammer: <g><path d="M4 18L12 8" stroke="#e0b040" strokeWidth="3" /><path d="M7 5c4-4 8-3 9 0l3 3-2 2-3-2-2 1-4-3z" fill="#c8ccd0" stroke="#6a7074" /></g>,
};

const STRIPS = [
  ['star', 'diamond', '>', 'mesh', 'circH', '>', 'circV', 'circE', 'circG', 'hash', '>', 'ef', '>', 'circP', '>', 'book', 'funnel', 'sel', 'frame', 'brush', '|', 'box1', 'box2', 'box3', 'box4', 'box5', 'lat', 'lat2', '|', 'mag', 'magx', '|', 'torch', 'L', '>', 'pen', 'gear'],
  ['ax', '*ax3', 'xz', '>', 'xy', '>', 'yz', '>', 'yx', '>', 'plane', 'rotate', '>', 'axr'],
  ['gearR', 'gear', 'n12', 'n26', 'net', 'green', 'green', '|', 'efp', 'cubeF', 'beamF', 'brick', '|', 'ibeam', '*wedge', 'slab', '*wall', '*plate', 'plateN', '|', 'mosR', 'sumR', 'axR2', 'efR'],
  ['*c0', 'c1', 'c2', 'c3', 'c4', 'c5', 'c6', 'c7', 'c8'],
];

const ACTIVE = 'border border-[#e0a04c] bg-[linear-gradient(#fbd79a,#f6b25c_50%,#fddf98)]';

const ToolButton = ({ name }) => {
  const active = name[0] === '*';
  const key = active ? name.slice(1) : name;
  return (
    <button aria-label={key} className={`flex h-[22px] w-[22px] shrink-0 items-center justify-center ${active ? ACTIVE : ''}`}>
      <svg width="20" height="20" viewBox="0 0 20 20" className="shrink-0 overflow-visible">{ICONS[key]}</svg>
    </button>
  );
};

const Strip = ({ items }) => (
  <div className="flex h-[27px] shrink-0 items-center bg-[linear-gradient(#d0d3d8,#c0c4cc_45%,#a5abb6_50%,#b4b9c2)]">
    <div className="flex w-[10px] flex-col items-center gap-[2px]">
      {[0, 1, 2, 3].map((i) => <i key={i} className="h-[2px] w-[2px] bg-[#3e4248]" />)}
    </div>
    {items.map((it, i) => {
      if (it === '>') return <span key={i} className="flex w-[13px] justify-center"><Arrow /></span>;
      if (it === '|') return <span key={i} className="flex w-2 justify-center"><i className="h-[20px] w-px bg-white" /></span>;
      return <ToolButton key={i} name={it} />;
    })}
    <div className="ml-[2px] flex h-[27px] w-[10px] items-end justify-center rounded-r bg-[linear-gradient(#8a8f96,#5a5d62)] pb-1">
      <svg width="7" height="7" viewBox="0 0 7 7"><path d="M1 1h5M1 3h5L3.500 6z" stroke="#fff" fill="#fff" /></svg>
    </div>
  </div>
);

// ---------- model view ----------

const PITCH = 17.76;
const G = '#808080';

const Model = () => {
  const floors = [];
  for (let i = 23; i >= 0; i--) {
    const d = i * PITCH;
    floors.push(
      <g key={i}>
        <path d={`M344 ${366 + d}L414 ${414 + d}L657 ${325 + d}L586 ${277 + d}z`} fill={G} stroke="#000" strokeWidth="2" />
        <path d={`M352 ${367 + d}L414 ${409 + d}M648 ${324 + d}L630 ${312 + d}`} stroke="#000" strokeWidth="1" strokeDasharray="2 1" fill="none" />
        <path d={`M374 ${382 + d}l22 -8M392 ${394 + d}l24 -9`} stroke="#000" strokeWidth="1" strokeDasharray="4 1" />
        {[455, 495, 534, 574, 614].map((x) => (
          <path key={x} d={`M${x} ${399 + d - (x - 455) * 0.366}l-16 -11`} stroke="#000" strokeWidth="1" />
        ))}
      </g>
    );
  }
  const hatchTop = [];
  const hatchLow = [];
  for (let x = 236; x < 350; x += 9) {
    hatchTop.push(<path key={x} d={`M${x} ${840 - (x - 236) * 0.37}l26 26`} />);
    hatchLow.push(<path key={x} d={`M${x} ${868 - (x - 236) * 0.37}l46 44`} />);
  }
  const cells = [];
  for (let k = 0; k < 7; k++) {
    const x = 455 + k * 32;
    const y = 868 - k * 12;
    cells.push(<path key={k} d={`M${x - 28} ${y - 36}l26 18M${x} ${y - 4}l70 50`} />);
  }
  const posts = [
    [219, 863, 965], [229, 842, 973], [256, 862, 993], [269, 838, 886], [287, 883, 1015], [308, 812, 872], [349, 366, 1018],
    [374, 387, 850], [392, 399, 888], [389, 920, 1002], [417, 805, 980], [427, 853, 987], [455, 399, 963], [468, 868, 973],
    [495, 384, 951], [507, 850, 958], [534, 370, 936], [546, 835, 943], [574, 355, 915], [585, 820, 930], [614, 341, 906],
    [626, 805, 915], [653, 325, 892], [664, 800, 900], [693, 862, 876], [705, 752, 885],
  ];
  return (
    <svg className="absolute top-0 left-0" width="970" height="834" viewBox="3 184 970 834" fill="none" stroke="#000" shapeRendering="crispEdges" role="img" aria-label="Расчетная схема">
      {/* base slab and pavilion */}
      <path d="M181 953L268 1018L379 1018L816 855L743 790L500 760L199 946z" fill={G} strokeWidth="3" />
      <path d="M654 695L676 688L702 706L725 712L741 724L750 747L745 762L751 776L743 790L802 830V850L739 868L620 900V720z" fill={G} stroke="none" />
      {/* left wing */}
      <path d="M219 832L376 772V788L229 842z" fill={G} strokeWidth="2" />
      <g strokeDasharray="4 1">{hatchTop}</g>
      <path d="M221 862L376 803V816L229 870z" fill={G} strokeWidth="2" />
      {/* podium floors */}
      <path d="M199 930L310 1010L427 968L665 878L739 850L700 790L349 830z" fill={G} strokeWidth="2" />
      <path d="M199 910L310 990L427 947L739 830L700 780L349 845z" fill={G} strokeWidth="2" />
      <path d="M219 892L310 957L320 965L715 820L700 806L690 770L362 838z" fill={G} strokeWidth="2" />
      <g strokeDasharray="4 1">{hatchLow}</g>
      <path d="M314 925L320 935L676 803L665 797L700 780L680 740L429 800L370 815L427 885z" fill={G} stroke="none" />
      <path d="M314 925L427 885L665 797L676 803L320 935L314 927" strokeWidth="2" />
      <path d="M351 810L360 806L429 853L702 752L654 697L600 690L390 800L420 860L370 850z" fill={G} stroke="none" />
      <path d="M352 803L429 853L702 752L654 700" fill={G} strokeWidth="2" />
      <path d="M323 897L401 867M352 812L390 843L427 885M359 863L390 887M390 843l12 -4M377 840L427 885M199 950V910M199 950L219 943M427 947L404 930M427 915L417 905M389 928L427 914L500 888M427 968L415 955M574 915V922L585 930M665 878L693 900M394 980L422 1001" strokeWidth="2" />
      <path d="M350 858l12 -8 12 5 -9 8zM352 856h20M362 850v12" strokeWidth="2" />
      <g strokeDasharray="5 2">
        {cells}
        <path d="M440 840L690 745M440 900L690 808M340 960L700 832M256 955L400 903M287 1000L500 920M389 941C410 941 420 936 440 920M389 962C420 962 430 955 450 940M230 905L262 894M219 943L310 908M256 973L310 953" />
      </g>
      {/* right pavilion details */}
      <path d="M654 695L676 688L719 722L677 730M654 708L702 750L741 735M711 743L741 763M691 760L715 778L741 762M702 768L691 772L683 765M665 797L702 785V768M688 792L713 817M706 810L739 798M685 830L704 843L739 826M715 860L739 850M802 830L743 790M802 830V848M802 830L739 853M713 817L739 799M645 706L660 718" strokeWidth="2" />
      <path d="M702 706C722 708 738 720 743 733C752 744 752 754 742 763M742 735L739 792" strokeWidth="3" />
      <path d="M720 714C735 722 741 728 744 734M742 735C748 748 746 756 741 763C753 774 752 784 743 793C752 804 752 818 739 828M741 763C732 772 724 776 711 778M739 798L716 812M739 826C728 836 722 840 704 845M683 725L703 717M685 722l18 -5M672 702l40 3M676 706l30 2M694 707l22 18" strokeWidth="2" />
      <path d="M672 694l6 2 3 5h-9z" fill="#fff" stroke="none" />
      <path d="M713 722v22M683 710v10M660 714l50 -4" />
      {floors}
      <path d="M655 705h5M713 712h5" stroke="#ffe94a" strokeWidth="3" />
      {posts.map(([x, a, b]) => <path key={x} d={`M${x} ${a}V${b}`} />)}
      {/* roof grid */}
      <path d="M374 385L420 368M392 396L470 368M431 382l24 17M470 368l25 18M505 353l29 18M545 338l29 18M585 323l29 18" strokeDasharray="5 1" />
      {/* set-back storeys */}
      <path d="M385 345L430 377L645 297L627 280L560 262L431 330z" fill={G} strokeWidth="2" />
      <path d="M402 349L470 325M415 360L640 284M450 350l20 14M510 325l26 18M550 312l22 14M431 352v30M414 360v12M628 300v10M589 316v10" strokeDasharray="6 1" />
      <path d="M470 366L509 352" strokeWidth="2" />
      <path d="M385 321L430 352L645 273L627 257L560 240L431 300z" fill={G} strokeWidth="2" />
      <path d="M402 326L431 316M415 336L635 262M431 328v22M470 305v20M535 282l14 12M588 264l20 14M573 243v24M628 257v12M509 324v10M549 308v12M588 294v10" strokeDasharray="6 1" />
      <path d="M470 324L509 308M470 344L509 330" strokeWidth="2" />
      <path d="M404 257L521 213L549 233L553 252V276L465 308L431 296L404 290z" fill={G} strokeWidth="2" />
      <path d="M404 257L431 278L549 234M404 273L463 316M404 257V292M431 278V290M492 227L516 244V256M505 221L530 240V254M549 233V244L553 252M423 253l2 5M466 237v4" strokeWidth="2" />
      <path d="M445 278v25M451 287v19M469 288v20M476 288v16M494 280v17M510 271v17M522 265v18M530 262v20M538 264v16M545 262v16M553 252v24" strokeWidth="3" />
      <path d="M465 308L553 276M444 287L480 275M440 268l20 14M480 262l18 12M484 252l12 5 14 -2M468 270h18M496 258l14 14M514 250l14 11M522 250l9 9M532 250l14 10M498 262l26 -8M470 276l18 -8M452 280l20 10M545 245l8 6" strokeWidth="2" />
      <path d="M455 289L553 252M457 292L553 256" strokeWidth="1" />
      <path d="M456 291L550 255" stroke="#808080" strokeWidth="2" />
      <path d="M404 291L425 285L463 316L431 328L385 298z" fill={G} strokeWidth="2" />
      <path d="M400 306L440 297M414 316L452 306M395 299L431 323" strokeDasharray="5 1" />
      <path d="M549 237L603 217L645 248L602 264L573 243L553 250z" fill={G} strokeWidth="2" />
      <path d="M555 257L577 248L579 251L562 259z" fill="#fff" stroke="#000" />
      <path d="M606 222L640 248M573 241L612 229M590 250L630 238M588 254v14M560 234l13 9" strokeDasharray="8 1" />
      {/* highlighted columns */}
      <g strokeWidth="5">
        <path d="M386 298V345" stroke="#c82800" /><path d="M645 248V296" stroke="#850000" />
        <path d="M417 414V574" stroke="#ff6600" /><path d="M417 574V663" stroke="#ffa21e" />
        <path d="M417 663V734" stroke="#ffbc2a" /><path d="M417 734V805" stroke="#ffd932" />
        <path d="M219 832V848" stroke="#ffff6e" /><path d="M219 848V863" stroke="#ffec50" />
        <path d="M309 898V927" stroke="#ffff6e" /><path d="M309 927V957" stroke="#ffec50" /><path d="M309 957V1012" stroke="#ffff6e" />
        <path d="M739 793V830" stroke="#ffec50" /><path d="M739 830V868" stroke="#ffff6e" />
      </g>
      <g fill="#000" stroke="none" fontSize="18" fontFamily="Liberation Serif" shapeRendering="auto">
        <text x="647" y="260">0.645</text><text x="647" y="283">0.714</text>
        <text x="388" y="309">0.586</text><text x="388" y="333">0.61</text>
        {TOWER_LABELS.map((t, i) => <text key={t} x="418" y={423 + i * PITCH}>{t}</text>)}
        <text x="220" y="839">0.103</text><text x="220" y="854">0.111</text>
        <text x="311" y="913">0.106</text><text x="311" y="942">0.172</text><text x="311" y="974">0.103</text><text x="311" y="1001">0.051</text>
        <text x="741" y="810">0.156</text><text x="741" y="837">0.0614</text><text x="741" y="857">0.0216</text>
      </g>
      {/* axis triad */}
      <g strokeWidth="1">
        <path d="M43 988V970M40 974l3 -4 3 4" stroke="#e01010" />
        <path d="M43 988L32 978M32 982v-4h4" stroke="#108010" />
        <path d="M43 984L28 994M30 990l-2 4h5" stroke="#1010c0" />
      </g>
      <g fontSize="15" fontWeight="bold" stroke="none" fontFamily="Liberation Sans">
        <text x="38" y="965" fill="#e01010">Z</text><text x="21" y="975" fill="#108010">X</text><text x="17" y="994" fill="#1010c0">Y</text>
      </g>
    </svg>
  );
};

// ---------- dialog ----------

const Field = ({ label, value = '', w, off }) => (
  <input aria-label={label} defaultValue={value} disabled={off} className={`h-5 shrink-0 rounded-none border border-[#e4e4e4] border-b-[#868686] px-[5px] ${w} ${off ? 'bg-[#f0f0f0]' : 'bg-white'}`} />
);

const Back = () => (
  <button className="h-[18px] w-[18px] shrink-0 rounded-[3px] border border-[#e6e6e6] bg-[#f7f7f7] text-[11px] leading-[14px] text-[#8b8b8b]">&lt;&lt;</button>
);

const Check = ({ id, dim }) => (
  <input id={id} type="checkbox" className={`h-[13px] w-[13px] shrink-0 appearance-none rounded-[3px] border bg-[#fafafa] ${dim ? 'border-[#c8c8c8]' : 'border-[#5a5a5a]'}`} />
);

const SideBtn = ({ children, flat, on, h = 'h-[21px]', label }) => (
  <button aria-label={label} className={`flex w-[31px] shrink-0 items-center justify-center rounded-[4px] border ${h} ${on ? 'border-[#1668ac] bg-[#cce4f7]' : flat ? 'border-[#e8e8e8] bg-[#f6f6f6]' : 'border-[#c8c8c8] bg-[#fdfdfd]'}`}>{children}</button>
);

const Dialog = () => (
  <div className="absolute top-[9px] left-[986px] flex h-[823px] w-[471px] flex-col rounded-[8px] border border-[#b4b4b4] bg-[#f0f0f0] font-dlg text-[11px] leading-[13px] text-black shadow-[0_4px_22px_rgba(0,0,0,0.28)]">
    <header className="flex h-[30px] shrink-0 items-center rounded-t-[8px] bg-[#f3f3f3] px-[8px] pb-[3px] text-[12px] text-[#8b8b8b]">
      <svg width="16" height="14" viewBox="0 0 16 14"><rect x="0.500" y="0.500" width="15" height="12" fill="#fff" stroke="#a8b4bc" /><rect x="2" y="2" width="5" height="9" fill="#4a9a84" /><rect x="7" y="2" width="4" height="9" fill="#c8d4dc" /><rect x="12" y="2" width="2" height="4" fill="#7898c0" /></svg>
      <h2 className="ml-[5px] flex-1">Перекосы</h2>
      <button aria-label="Закрыть" className="mr-px"><svg width="12" height="12" viewBox="0 0 12 12"><path d="M1 1l10 10M11 1L1 11" stroke="#777" /></svg></button>
    </header>

    <div className="mt-[8px] ml-[2px] h-[63px] w-[301px] shrink-0 border border-[#dcdcdc] pt-[3px] pl-[7px]">
      <div className="flex h-[33px] items-center">
        <span className="w-[16px]">Pz</span>
        <Field label="Pz" w="w-[46px]" off />
        <span className="w-[3px]" /><Back />
        <div className="ml-[4px] flex h-[33px] w-[162px] items-center border border-[#dcdcdc]">
          <span className="ml-px w-[21px]">Pxy</span>
          <Field label="Pxy" w="w-[46px]" off />
          <span className="w-[3px]" /><Back />
          <span className="ml-[9px] w-[25px]">№S</span>
          <Field label="№S" value="1" w="w-[32px]" />
        </div>
        <button aria-label="Обновить" className="ml-[5px] flex h-[21px] w-[31px] items-center justify-center rounded-[4px] border border-[#c8c8c8] bg-[#fdfdfd]">
          <svg width="16" height="16" viewBox="0 0 16 16"><path d="M7 1c-3 0-3 2-3 6H1l4 4 4-4H6c0-3 0-4 1-6z" fill="#3c7a34" stroke="#24521e" strokeWidth=".5" /><path d="M9 15c3 0 4-2 4-6h2l-4-4-3 4h2c0 3 0 4-1 6z" fill="#3c7a34" stroke="#24521e" strokeWidth=".5" /></svg>
        </button>
      </div>
      <div className="mt-[2px] flex h-5 items-center pl-[83px]">
        <span className="w-[27px]">Teta</span>
        <Field label="Teta" w="w-[46px]" off />
        <span className="w-[3px]" /><Back />
        <span className="ml-[15px] w-[19px] pt-[3px]">qd</span>
        <Field label="qd" value="1" w="w-[32px]" />
        <span className="w-[3px]" /><Back />
      </div>
    </div>

    <fieldset className="relative mx-[4px] mt-[9px] h-[679px] border border-[#dcdcdc]">
      <legend className="ml-[5px] h-[3px] px-[2px] leading-[4px]">Пары узлов для определения перекосов</legend>
      <div className="flex h-[44px] items-start gap-[2px] pt-[12px] pl-[5px]">
        <span className="pt-[6px]"><Check id="auto" /></span>
        <label htmlFor="auto">Отметка с автоматическим<br />определением характерных пар узлов</label>
      </div>
      <div className="flex">
        <div className="h-[613px] w-[417px] shrink-0 border border-[#828790] bg-[#f0f0f0] pt-px pl-px">
          <div className="relative h-[592px] overflow-hidden">
            <table className="w-[395px] table-fixed border-collapse bg-white text-left">
              <colgroup><col className="w-[111px]" /><col className="w-[61px]" /><col className="w-[119px]" /><col className="w-[104px]" /></colgroup>
              <thead>
                <tr className="h-[23px] bg-[linear-gradient(#fff,#e9e9e9)]">
                  {['Узлы', 'dZ', 'Перекос*qd*1000', '№ загр.'].map((t) => <th key={t} className="border-r border-b border-[#c4c4c4] p-0 pb-[2px] pl-[5px] font-normal">{t}</th>)}
                </tr>
              </thead>
              <tbody>
                {ROWS.map(([color, nodes, dz, val, load]) => (
                  <tr key={nodes} className="h-[17px] border-b border-[#ececec]">
                    <td className="border-r border-[#ececec] p-0">
                      <span className="flex h-4 items-center pl-[4px]"><i className="mr-[2px] h-4 w-4" style={{ backgroundColor: color }} />{nodes}</span>
                    </td>
                    <td className="border-r border-[#ececec] p-0 pl-[5px]">{dz}</td>
                    <td className="p-0 pl-[5px]">{val}</td>
                    <td className="p-0 pl-[7px]">{load}</td>
                  </tr>
                ))}
              </tbody>
            </table>
          </div>
          <div className="mt-[7px] ml-[18px] h-[2px] w-[191px] bg-[#868686]" />
        </div>
        <div className="absolute top-[45px] left-[293px] h-[597px] w-[105px] bg-[rgba(255,0,0,0.5)]" />
        <div className="absolute top-[64px] left-[406px] h-[461px] w-[2px] bg-[#868686]" />
        <div className="ml-[3px] flex flex-col gap-0">
          <div className="mt-[4px]"><SideBtn flat label="Добавить"><svg width="14" height="14" viewBox="0 0 14 14"><path d="M5 0h4v5h5v4H9v5H5V9H0V5h5z" fill="#9a9a9a" /></svg></SideBtn></div>
          <div className="mt-[14px]"><SideBtn flat label="Вырезать"><svg width="16" height="16" viewBox="0 0 16 16"><path d="M3 0l7 11M13 0L6 11" stroke="#8f8f8f" strokeWidth="2.500" /><circle cx="4" cy="13" r="2" fill="none" stroke="#8f8f8f" strokeWidth="2" /><circle cx="12" cy="13" r="2" fill="none" stroke="#8f8f8f" strokeWidth="2" /></svg></SideBtn></div>
          <div className="mt-[8px] ml-[3px]"><SideBtn h="h-[26px]" label="Фильтр"><svg width="16" height="16" viewBox="0 0 16 16"><path d="M1 1h14L10 8v7l-4-2V8z" fill="#e8eef0" stroke="#4a6470" strokeWidth="1.500" /><path d="M4 2h8L8 8z" fill="#c81e1e" /></svg></SideBtn></div>
          <div className="mt-[11px] ml-[2px] flex items-center gap-[2px] text-[#8b8b8b]"><Check id="pz" dim /><label htmlFor="pz">Pz</label></div>
          <div className="mt-[15px] ml-[2px] flex items-center gap-[2px] text-[#8b8b8b]"><Check id="pxy" dim /><label htmlFor="pxy">Pxy</label></div>
          <div className="mt-[10px] ml-[3px]"><SideBtn on label="Шкала"><svg width="16" height="5" viewBox="0 0 16 5"><rect width="16" height="5" fill="#2c3c44" /><rect x="1" y="1" width="3" height="3" fill="#e02020" /><rect x="4" y="1" width="3" height="3" fill="#f8d020" /><rect x="7" y="1" width="3" height="3" fill="#30b040" /><rect x="10" y="1" width="5" height="3" fill="#30a8e0" /></svg></SideBtn></div>
          <div className="mt-[10px] ml-[3px]"><SideBtn label="Цвета"><svg width="18" height="16" viewBox="0 0 18 16"><path d="M3 2l9 11 2 2-1-4L5 1z" fill="#333" stroke="#222" /><path d="M12 13l2 2" stroke="#e0b050" strokeWidth="2" /><g><circle cx="9" cy="2" r="1.500" fill="#4040e0" /><circle cx="13" cy="4" r="1.500" fill="#9040c0" /><circle cx="15" cy="8" r="1.500" fill="#e04080" /><circle cx="16" cy="12" r="1.500" fill="#e03030" /><circle cx="2" cy="7" r="1.500" fill="#50c050" /><circle cx="2" cy="11" r="1.500" fill="#90d040" /></g><path d="M2 15h10" stroke="#888" /></svg></SideBtn></div>
          <div className="mt-[4px] -ml-px flex h-[91px] w-[41px] flex-col border border-r-0 border-[#dcdcdc] pt-[5px] pl-[3px]">
            <SideBtn flat label="Поменять"><svg width="16" height="16" viewBox="0 0 16 16"><path d="M1 5l4-4v3h6v2H5v3zM15 11l-4-4v3H5v2h6v3z" fill="#9a9a9a" /></svg></SideBtn>
            <span className="mt-[6px] ml-[9px] h-[13px]"><Check id="anchor" /></span>
            <span className="mt-[12px]"><SideBtn flat label="Привязка"><svg width="16" height="16" viewBox="0 0 16 16"><rect x="0" y="0" width="4" height="16" fill="#9a9a9a" /><circle cx="10.500" cy="8" r="4.500" fill="none" stroke="#9a9a9a" strokeWidth="1.500" /><path d="M8 6l5 4M13 6l-5 4" stroke="#9a9a9a" strokeWidth="1.500" /></svg></SideBtn></span>
          </div>
          <div className="mt-[16px]"><SideBtn label="Справка"><span className="font-serif-x text-[20px] leading-[18px] font-bold text-[#1f5a2a]">?</span></SideBtn></div>
        </div>
      </div>
      <div className="flex items-center gap-[2px] pt-[3px] pl-[5px]"><Check id="frag" /><label htmlFor="frag">Список для фрагмента</label></div>
    </fieldset>
  </div>
);

// ---------- status bar controls ----------

const Combo = ({ w, value, label, red }) => (
  <div className={`relative h-[22px] shrink-0 border border-[#8c9092] ${w}`}>
    <select aria-label={label} className={`block h-full w-full appearance-none overflow-hidden pr-[14px] pl-[3px] text-[11px] leading-[18px] text-clip whitespace-nowrap ${red ? 'bg-[#f47272] text-[#600808]' : 'bg-[#f0f0f0] text-black'}`}>
      <option>{value}</option>
    </select>
    <Arrow className="pointer-events-none absolute top-[7px] right-[4px]" />
  </div>
);

const Flat = ({ children }) => <div className="flex h-[22px] items-center bg-[#d9dcdc]">{children}</div>;

// ---------- application ----------

export default function App() {
  const [tab, setTab] = useState('Анализ');

  return (
    <div className="relative flex h-screen w-full flex-col overflow-hidden bg-[#505050] font-ui text-[12px] text-black">
      <style>{`
        .font-ui { font-family: "Noto Sans", "Open Sans", sans-serif; }
        .font-dlg { font-family: "Noto Sans", "Open Sans", sans-serif; }
        .font-serif-x { font-family: "Liberation Serif", serif; }
      `}</style>

      {/* title bar */}
      <header className="relative flex h-[35px] shrink-0 items-center border-t border-[#2f7596] bg-white">
        <div className="flex items-center pt-[2px] pl-[68px]">
          <QIcon k="new" /><span className="flex w-[17px] justify-center"><Arrow /></span>
          <QIcon k="open" /><span className="w-[6px]" /><QIcon k="save" /><span className="w-[6px]" />
          <QIcon k="undo" /><span className="flex w-[17px] justify-center"><Arrow /></span>
          <QIcon k="redo" /><span className="flex w-[17px] justify-center"><Arrow /></span>
          <QIcon k="cube" /><span className="w-[6px]" /><QIcon k="map" /><span className="w-[6px]" /><QIcon k="cam" /><span className="w-[6px]" />
          <QIcon k="bolt" /><span className="flex w-[17px] justify-center"><Arrow /></span>
          <QIcon k="books" /><span className="w-[6px]" /><QIcon k="lock" /><span className="w-[6px]" />
          <span className="w-[24px] text-center font-['Liberation_Sans'] text-[21px] text-[#4f4a7c] italic">Si</span>
          <span className="w-[6px]" /><QIcon k="gear" /><span className="w-[4px]" />
          <span className="flex w-[24px] flex-col font-serif-x"><span className="text-[10px] leading-[11px] text-[#333f6c]">:,xx..</span><span className="text-[17px] leading-[18px] text-[#b42020]">Aa</span></span>
          <svg width="7" height="8" viewBox="0 0 7 8" className="ml-[20px]"><path d="M0 1h7M1 4h5L3.500 7z" stroke="#444" fill="#444" /></svg>
        </div>
        <h1 className="pointer-events-none absolute left-[1099px] pt-[2px] text-[11px] font-bold whitespace-nowrap">LIRA-FEM 2025 R1 x64 - [1111·]</h1>
        <div className="ml-auto flex items-center gap-[34px] pr-[18px] pb-[5px]">
          <button aria-label="Свернуть"><svg width="11" height="12" viewBox="0 0 11 12"><path d="M0 6.500h11" stroke="#111" /></svg></button>
          <button aria-label="Развернуть"><svg width="12" height="12" viewBox="0 0 12 12"><rect x="1.500" y="1.500" width="9" height="9" fill="none" stroke="#111" /></svg></button>
          <button aria-label="Закрыть окно"><svg width="12" height="12" viewBox="0 0 12 12"><path d="M1 1l10 10M11 1L1 11" stroke="#111" /></svg></button>
        </div>
      </header>

      <button aria-label="Меню" className="absolute top-[9px] left-[13px] z-10 flex h-[37px] w-[37px] items-center justify-center rounded-full border border-[#777] bg-[radial-gradient(circle_at_50%_40%,#ffffff,#c9cdd0_70%,#8e9396)] shadow">
        <svg width="35" height="35" viewBox="0 0 35 35" fill="none" stroke="#3f92ae" strokeWidth="2">
          <path d="M8 6l14-3M9 9l17-3" stroke="#7ab8cc" strokeWidth="3" />
          <path d="M10 17c4 0 5-5 1-6s-7 3-6 6 4 5 8 3M25 15c-3 1-5-3-2-5s7 0 7 4-3 6-7 4" />
          <path d="M14 16v11l3 5M17 15l1 17M21 14l1 17M25 20v8" strokeWidth="2.600" stroke="#5ba8c0" />
        </svg>
      </button>

      {/* ribbon tabs */}
      <nav className="flex h-[23px] shrink-0 items-end pl-[62px] text-[11px] text-white">
        {TABS.map((t) => (
          <button key={t.label} onClick={() => setTab(t.label)} className={`h-[22px] shrink-0 pt-px whitespace-nowrap ${t.cls} ${tab === t.label ? 'rounded-t-[3px] border border-b-0 border-[#a4dcec] bg-[linear-gradient(#eef0f3,#d2d6dc)] text-black' : ''}`}>{t.label}</button>
        ))}
        <div className="ml-auto flex h-[22px] items-center pr-[5px]">
          <span>Стиль</span><Arrow className="mx-[6px]" /><span>Окно</span><Arrow className="mx-[8px]" />
          <span className="text-[17px] leading-[17px] font-bold text-[#46566e]">?</span><Arrow className="mx-[5px]" />
          <span className="mx-[6px] mt-[8px] h-[2px] w-[7px] bg-[#aaa]" />
          <svg width="9" height="9" viewBox="0 0 9 9" className="mx-[6px]"><path d="M2.500 2.500v-2h6v5h-2M.5 3.500h6v5h-6z" fill="none" stroke="#c4c4c4" /></svg>
          <svg width="9" height="9" viewBox="0 0 9 9" className="ml-[5px]"><path d="M1 1l7 7M8 1L1 8" stroke="#b4b4b4" strokeWidth="2" /></svg>
        </div>
      </nav>

      {/* ribbon */}
      <div className="flex h-[122px] shrink-0 gap-[3px] rounded-[3px] bg-[linear-gradient(#d9dce0_0px,#c3c8d0_16px,#b2b9c6_17px,#c4cbd3_60px,#e6ecec_112px,#d0d4d6_118px)] pt-[3px] pl-[5px]">
        <Panel w="w-[278px]" label="Деформации">
          <button className="ml-[3px] flex h-[98px] w-[57px] shrink-0 flex-col items-center border border-[#c07818] bg-[linear-gradient(#d99a4c_0px,#fbb45e_20px,#ff9a30_36px,#ffb040_52px,#fde8a8_53px,#fbe292_75px,#fed75a_98px)] text-[11px] leading-[13px]">
            <span className="flex h-[54px] items-center"><BeamIcon /></span>
            <span>НДС</span>
            <span className="flex items-center gap-[2px]">схемы<Arrow /></span>
          </button>
          <Col w="w-[34px]"><Cell><FrameIcon kind="frame" /></Cell><Cell><FrameIcon kind="pink" /></Cell><Cell><FrameIcon kind="ruler" /></Cell></Col>
          <Sep w="w-[6px]" />
          <BigButton w="w-[64px]" icon={<MosaicG />} lines={['Мозаика/', 'изополя']} arrow />
          <Col w="w-[24px]"><Sym b="X" color="text-[#2080ae]" /><Sym b="Y" color="text-[#2080ae]" /><Sym b="Z" color="text-[#2080ae]" /></Col>
          <Col w="w-[47px]"><Sym b="U" s="x" color="text-[#2080ae]" /><Sym b="U" s="y" color="text-[#2080ae]" /><Sym b="U" s="z" color="text-[#2080ae]" /></Col>
          <Col w="w-[21px]"><Sym b="W" color="text-[#8f9bab]" /><Cell><AxIcon /></Cell><Cell><CircleX /></Cell></Col>
          <Col w="w-[20px]"><Cell /><Cell><Arrow /></Cell></Col>
        </Panel>

        <Panel w="w-[220px]" label="Усилия в стержнях">
          <BigButton w="w-[64px]" icon={<DiagramIcon />} lines={['Эпюры/', 'мозаика']} arrow />
          <Col w="w-[26px]"><Sym b="N" /><Sym b="Q" s="y" /><Sym b="Q" s="z" /></Col>
          <Col w="w-[42px]"><Sym b="M" s="x" /><Sym b="M" s="y" /><Sym b="M" s="z" /></Col>
          <Col w="w-[27px]"><Sym b="B" s="w" color="text-[#a3acbd]" /><Sym b="R" s="y" color="text-[#a3acbd]" /><Sym b="R" s="z" color="text-[#a3acbd]" /></Col>
          <Col w="w-[14px]"><Cell><Arrow light /></Cell><Cell><Arrow light /></Cell><Cell><Arrow light /></Cell></Col>
          <Sep w="w-[4px]" />
          <Col w="w-[41px]">
            <Sym b="f" s="y" color="text-[#2a3246]" /><Sym b="f" s="z" color="text-[#2a3246]" />
            <Cell><SumF /></Cell>
          </Col>
        </Panel>

        <Panel w="w-[237px]" label="Напряжения в пластинах и объемных КЭ">
          <BigButton w="w-[62px]" icon={<Mosaic />} lines={['Мозаика/', 'изополя']} arrow />
          <Col w="w-[32px]"><Sym b="M" s="x" color="text-[#65267a]" /><Sym b="M" s="y" color="text-[#65267a]" /><Sym b="M" s="xy" color="text-[#65267a]" /></Col>
          <Col w="w-[34px]"><Sym b="Q" s="x" color="text-[#65267a]" /><Sym b="Q" s="y" color="text-[#65267a]" /><Sym b="R" s="z" color="text-[#65267a]" /></Col>
          <Col w="w-[34px]"><Sym b="N" s="x" color="text-[#65267a]" /><Sym b="N" s="y" color="text-[#65267a]" /><Sym b="N" s="z" color="text-[#af9bbd]" /></Col>
          <Col w="w-[34px]"><Sym b="τ" s="xy" color="text-[#65267a]" /><Sym b="τ" s="xz" color="text-[#af9bbd]" /><Sym b="τ" s="yz" color="text-[#af9bbd]" /></Col>
          <Col w="w-[34px]"><Sym b="N" s="x" p="a" color="text-[#a78fb8]" /><Sym b="N" s="y" p="a" color="text-[#a78fb8]" /><Sym b="N" s="z" p="a" color="text-[#af9bbd]" /></Col>
        </Panel>

        <Panel w="w-[210px]" label="Усилия в спец. элементах">
          <BigButton w="w-[60px]" dim icon={<BigN color="text-[#c48088]" />} lines={['N (252,', '262 КЭ)']} />
          <Col w="w-[34px]"><Sym b="N" s="x" color="text-[#8094c6]" /><Sym b="N" s="y" color="text-[#8094c6]" /><Sym b="N" s="z" color="text-[#8fa2d2]" /></Col>
          <Col w="w-[34px]"><Sym b="M" s="x" color="text-[#8094c6]" /><Sym b="M" s="y" color="text-[#8094c6]" /><Sym b="M" s="z" color="text-[#8fa2d2]" /></Col>
          <Col w="w-[32px]"><Sym b="N" color="text-[#95a58c]" /><Sym b="Q" s="y" color="text-[#a3b597]" /><Sym b="Q" s="z" color="text-[#adbf9f]" /></Col>
          <Sep w="w-[10px]" />
          <Col w="w-[34px]"><Sym b="R" s="z" color="text-[#cfa189]" sc="text-[#8b8f98]" /></Col>
        </Panel>

        <Panel w="w-[43px]" label="Стык">
          <Col w="w-[41px]"><Sym b="N" s="y" color="text-[#b9a68a]" /><Sym b="Q" s="x" color="text-[#c1ad8a]" /><Sym b="Q" s="z" color="text-[#cbb996]" /></Col>
        </Panel>

        <Panel w="w-[201px]" label="Усилия в одноузловых КЭ">
          <BigButton w="w-[60px]" dim icon={<BigN color="text-[#b9a484]" />} lines={['N (251,', '261 КЭ)']} />
          <Col w="w-[34px]"><Sym b="R" s="x" color="text-[#88a7b3]" /><Sym b="R" s="y" color="text-[#8db0b9]" /><Sym b="R" s="z" color="text-[#97bdc3]" /></Col>
          <Col w="w-[34px]"><Sym b="R" s="ux" color="text-[#88a7b3]" /><Sym b="R" s="uy" color="text-[#8db0b9]" /><Sym b="R" s="uz" color="text-[#97bdc3]" /></Col>
          <Col w="w-[32px]"><Sym b="N" color="text-[#ac86a8]" /><Sym b="Q" s="y" color="text-[#b999b8]" /><Sym b="Q" s="z" color="text-[#c4a6c2]" /></Col>
          <Col w="w-[34px]"><Sym b="R" s="z" color="text-[#cfa189]" sc="text-[#8b8f98]" /></Col>
        </Panel>

        <Panel w="w-[95px]" label="Нел. жесткости">
          <Col w="w-[36px]"><Cell><StiffIcon t="E" sub="0" /></Cell><Cell><StiffIcon t="E1" /></Cell><Cell><StiffIcon t="EF" kind="ef" /></Cell></Col>
          <Col w="w-[8px]"><Cell><Arrow light /></Cell><Cell><Arrow light /></Cell><Cell><Arrow light /></Cell></Col>
          <Col w="w-[36px]"><Cell><StiffIcon t="E" kind="bar" /></Cell><Cell><StiffIcon t="Rx" kind="rx" /></Cell></Col>
          <Col w="w-[8px]"><Cell><Arrow light /></Cell><Cell><Arrow light /></Cell></Col>
        </Panel>

        <Panel w="w-[315px]" label="Инструменты">
          <BigButton w="w-[61px]" icon={<CenterIcon />} lines={['Найти', 'центр']} />
          <Col w="w-[33px]">
            <Cell><ToolIcon k="pick" /></Cell>
            <Cell className={`w-[33px] ${ACTIVE}`}><ToolIcon k="rot" /></Cell>
            <Cell><ToolIcon k="rot2" /></Cell>
          </Col>
          <Col w="w-[8px]"><Cell><Arrow /></Cell></Col>
          <Col w="w-[33px]"><Cell><ToolIcon k="num" /></Cell><Cell><ToolIcon k="graph" /></Cell><Cell><ToolIcon k="f" /></Cell></Col>
          <Col w="w-[10px]"><Cell><Arrow light /></Cell><Cell><Arrow /></Cell></Col>
          <Col w="w-[34px]"><Cell><ToolIcon k="sum" /></Cell><Cell><ToolIcon k="mos" /></Cell><Cell><ToolIcon k="soil" /></Cell></Col>
          <Col w="w-[44px]">
            <Cell className="pr-3"><ToolIcon k="q" /></Cell>
            <div className={`relative flex h-[30px] w-[42px] ${ACTIVE}`}>
              <button aria-label="Перекосы" className="flex flex-1 items-center justify-center border-r border-[#d89a4a]"><DeltaHs /></button>
              <button aria-label="Показать список" className="flex w-[12px] items-center justify-center"><Arrow /></button>
              {/* drop-down list */}
              <div className="absolute top-[29px] left-0 z-50 w-[186px] border border-[#8e8e8e] bg-[#fafafa]">
                <div className="flex flex-col gap-[12px] border-4 border-[#fb7d7d] px-[2px] py-[3px] text-[11px]">
                  <button className="flex items-center gap-[5px]"><span className="rounded-[3px] border border-[#f0a040] bg-[#fee293]"><DeltaHs size={46} /></span>Перекосы</button>
                  <button className="flex items-center gap-[5px] whitespace-nowrap"><span className="rounded-[3px] border border-[#f0a040] bg-[#fee293]"><DeltaHs size={46} mosaic /></span>Мозаика перекосов</button>
                </div>
              </div>
            </div>
          </Col>
          <Col w="w-[32px]"><Cell><ToolIcon k="watch" /></Cell><Cell><ToolIcon k="film" /></Cell></Col>
          <Col w="w-[12px]"><Cell /><Cell><Arrow light /></Cell></Col>
          <Col w="w-[30px]"><Cell><ToolIcon k="swap" /></Cell><Cell><ToolIcon k="phi" /></Cell></Col>
          <Col w="w-[12px]"><Cell><Arrow /></Cell><Cell><Arrow /></Cell></Col>
        </Panel>

        <Panel w="w-[67px]" label="Документы">
          <BigButton w="w-[65px]" icon={<TableIcon />} lines={['Докумен-', 'ты']} arrow />
        </Panel>
      </div>
      <div className="h-[4px] shrink-0 border-b border-[#8a8a8a] bg-[#454545]" />

      {/* work area */}
      <main className="relative mr-[3px] ml-[3px] flex-1 overflow-hidden bg-white font-serif-x">
        <Model />
        <div className="relative pt-[3px]">
          <p className="h-[23px] w-[573px] bg-[#ff8080] pl-[8px] text-[21px] leading-[23px] whitespace-nowrap text-[#800000]">Огибающая максимальных по абсолютной величине значений</p>
          <p className="h-[20px] w-[300px] pl-[3px] text-[21px] leading-[19px] whitespace-nowrap">Мозаика перекосов (*1000)</p>
        </div>
        <ul className="relative mt-[100px] ml-[10px] w-[100px]">
          {LEGEND.map(([bg, pct, val, fg]) => (
            <li key={val} className="flex h-[73px] gap-[9px] text-[18px]">
              <span className="flex h-[72px] w-[22px] items-center justify-center border border-black" style={{ backgroundColor: bg, color: fg }}>
                <span className="-rotate-90">{pct}</span>
              </span>
              <span className="-mt-[8px] leading-[20px]">{val}</span>
            </li>
          ))}
          <li className="-mt-[8px] ml-[31px] text-[18px] leading-[20px]">0.0216</li>
        </ul>
        <Dialog />
      </main>

      {/* toolbars */}
      <div className="mx-[3px] flex shrink-0 border-t border-[#d8d8d8]">
        {STRIPS.map((s, i) => <Strip key={i} items={s} />)}
      </div>

      {/* status bar */}
      <footer className="mx-[3px] flex h-[25px] shrink-0 items-center bg-[linear-gradient(#b0b3b4,#8b8d8e_50%,#747677)]">
        <div className="h-full w-[473px] shrink-0 bg-[linear-gradient(#454a55_0px,#3c404a_7px,#31302f_8px)]" />
        <div className="ml-[4px] flex items-center">
          <Flat><ToolButton name="*penR" /><span className="w-[2px]" /><ToolButton name="sigR" /><span className="w-[2px]" /><ToolButton name="greyR" /><span className="w-[2px]" /><ToolButton name="greyR" /></Flat>
          <span className="w-[4px]" /><Combo w="w-[114px]" label="Стадия" value="" />
          <span className="w-[6px]" />
          <Flat><ToolButton name="up" /><ToolButton name="down" /></Flat>
          <span className="w-[2px]" />
          <Combo w="w-[216px]" label="Загружение" value="MAX ABS" red />
          <span className="w-[7px]" />
          <Flat><ToolButton name="*def" /><span className="w-[3px]" /><ToolButton name="curve" /><span className="w-[3px]" /><ToolButton name="spring" /><span className="w-[2px]" /><ToolButton name="up" /><span className="w-[2px]" /><ToolButton name="down" /></Flat>
          <span className="w-[3px]" /><Combo w="w-[55px]" label="Форма" value="" />
          <span className="w-px" /><Combo w="w-[54px]" label="Слой" value="Средний" />
          <span className="w-[7px]" /><Flat><ToolButton name="list" /></Flat>
          <span className="w-[4px]" /><Combo w="w-[56px]" label="Список" value="" />
          <span className="mx-[3px] h-[25px] w-[2px] bg-[#3c3c3c]" />
          <Flat><ToolButton name="hammer" /></Flat>
          <Combo w="w-[216px]" label="Вариант" value="1. Design option 1" />
        </div>
        <div className="ml-auto flex h-full items-center text-[11px]">
          <span className="w-[133px] border-l-2 border-[#555] pl-[3px] leading-[22px]">Уз.: 0 / 53618</span>
          <span className="w-[132px] border-l-2 border-[#555] pl-[3px] leading-[22px]">Эл.: 0 / 61681</span>
          <span className="flex w-[99px] items-end justify-between border-l-2 border-[#555] pl-[3px] leading-[22px]">
            Загр.: 1 / 9
            <svg width="10" height="10" viewBox="0 0 10 10" className="mb-[2px]"><path d="M7 1h2v2H7zM4 4h2v2H4zM7 4h2v2H7zM1 7h2v2H1zM4 7h2v2H4zM7 7h2v2H7z" fill="#333" /></svg>
          </span>
        </div>
      </footer>
    </div>
  );
}
